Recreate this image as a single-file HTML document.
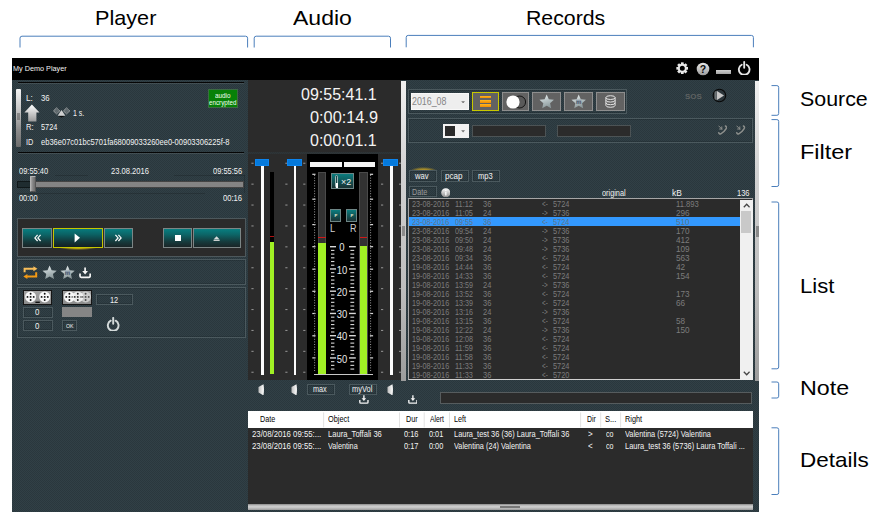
<!DOCTYPE html>
<html><head><meta charset="utf-8"><title>My Demo Player</title>
<style>
html,body{margin:0;padding:0;background:#fff;}
body{width:876px;height:517px;position:relative;overflow:hidden;font-family:"Liberation Sans",sans-serif;}
.a{position:absolute;display:block;}
.t{position:absolute;white-space:nowrap;display:block;}
.tex{background-image:repeating-conic-gradient(#314046 0 25%,#2a373d 0 50%);background-size:2px 2px;}
</style></head><body>
<span class="t" style="top:8.00px;font-size:20.2px;line-height:20.2px;color:#000;left:95.20px;transform-origin:0 0;transform:scaleX(1.0724);">Player</span>
<span class="t" style="top:8.00px;font-size:20.2px;line-height:20.2px;color:#000;left:293.40px;transform-origin:0 0;transform:scaleX(1.1401);">Audio</span>
<span class="t" style="top:8.00px;font-size:20.2px;line-height:20.2px;color:#000;left:526.20px;transform-origin:0 0;transform:scaleX(1.0543);">Records</span>
<span class="t" style="top:89.00px;font-size:20.2px;line-height:20.2px;color:#000;left:799.80px;transform-origin:0 0;transform:scaleX(1.0594);">Source</span>
<span class="t" style="top:142.00px;font-size:20.2px;line-height:20.2px;color:#000;left:800.00px;transform-origin:0 0;transform:scaleX(1.1630);">Filter</span>
<span class="t" style="top:276.00px;font-size:20.2px;line-height:20.2px;color:#000;left:800.00px;transform-origin:0 0;transform:scaleX(1.0944);">List</span>
<span class="t" style="top:378.00px;font-size:20.2px;line-height:20.2px;color:#000;left:800.20px;transform-origin:0 0;transform:scaleX(1.1531);">Note</span>
<span class="t" style="top:450.00px;font-size:20.2px;line-height:20.2px;color:#000;left:800.20px;transform-origin:0 0;transform:scaleX(1.1143);">Details</span>
<svg class="a" style="left:0px;top:0px;" width="876" height="517" viewBox="0 0 876 517"><g fill="none" stroke="#4a7ebb" stroke-width="1"><path d="M20,47.5 V38.2 Q20,36.2 22,36.2 H245.6 Q247.6,36.2 247.6,38.2 V47.5"/><path d="M254.2,47.5 V38.2 Q254.2,36.2 256.2,36.2 H388.5 Q390.5,36.2 390.5,38.2 V47.5"/><path d="M406.2,47.3 V37.4 Q406.2,35.4 408.2,35.4 H751.4 Q753.4,35.4 753.4,37.4 V47.3"/><path d="M771.5,85.6 H776.9000000000001 Q778.7,85.6 778.7,87.39999999999999 V113.5 Q778.7,115.3 776.9000000000001,115.3 H771.5"/><path d="M771.5,119.6 H776.9000000000001 Q778.7,119.6 778.7,121.39999999999999 V184.7 Q778.7,186.5 776.9000000000001,186.5 H771.5"/><path d="M771.5,202 H776.9000000000001 Q778.7,202 778.7,203.8 V367.0 Q778.7,368.8 776.9000000000001,368.8 H771.5"/><path d="M771.5,382 H776.9000000000001 Q778.7,382 778.7,383.8 V396.2 Q778.7,398 776.9000000000001,398 H771.5"/><path d="M771.5,427.8 H776.9000000000001 Q778.7,427.8 778.7,429.6 V492.7 Q778.7,494.5 776.9000000000001,494.5 H771.5"/></g></svg>
<div class="a tex" style="left:12px;top:58px;width:746.8px;height:453.6px;background-color:#2d3b41;"></div>
<div class="a" style="left:12px;top:58px;width:746.8px;height:22px;background:#000;"></div>
<span class="t" style="top:65.00px;font-size:7.8px;line-height:7.8px;color:#f4f4f4;left:12.70px;transform-origin:0 0;transform:scaleX(0.9316);">My Demo Player</span>
<svg class="a" style="left:675.6px;top:61.6px;" width="12.6" height="12.6" viewBox="0 0 14 14"><g transform="translate(7,7)"><g fill="#e8e8e8"><rect x="-1.5" y="-6.6" width="3" height="3.2" transform="rotate(0)"/><rect x="-1.5" y="-6.6" width="3" height="3.2" transform="rotate(45)"/><rect x="-1.5" y="-6.6" width="3" height="3.2" transform="rotate(90)"/><rect x="-1.5" y="-6.6" width="3" height="3.2" transform="rotate(135)"/><rect x="-1.5" y="-6.6" width="3" height="3.2" transform="rotate(180)"/><rect x="-1.5" y="-6.6" width="3" height="3.2" transform="rotate(225)"/><rect x="-1.5" y="-6.6" width="3" height="3.2" transform="rotate(270)"/><rect x="-1.5" y="-6.6" width="3" height="3.2" transform="rotate(315)"/></g><circle r="3.9" fill="none" stroke="#e8e8e8" stroke-width="2.2"/></g></svg>
<svg class="a" style="left:695.5px;top:61.8px;" width="14" height="14" viewBox="0 0 14 14"><defs><linearGradient id="hg" x1="0" y1="0" x2="0" y2="1"><stop offset="0" stop-color="#e8e8e8"/><stop offset="1" stop-color="#9c9c9c"/></linearGradient></defs><circle cx="7" cy="7" r="6.3" fill="url(#hg)"/><text x="7" y="10.6" font-size="10.5" font-weight="700" text-anchor="middle" fill="#0a0a0a" font-family="Liberation Sans, sans-serif">?</text></svg>
<div class="a" style="left:716.4px;top:70.2px;width:14.3px;height:4.2px;background:linear-gradient(#d0d0d0,#a4a4a4);"></div>
<svg class="a" style="left:737.4px;top:60.6px;" width="14.4" height="14.4" viewBox="0 0 14 14"><g fill="none" stroke="#e6e6e6" stroke-width="1.8" stroke-linecap="round"><path d="M4.6,3.6 A5.2,5.2 0 1 0 9.4,3.6"/><path d="M7,0.9 V6.6"/></g></svg>
<div class="a" style="left:17.5px;top:82.1px;width:226.7px;height:1.3px;background:#050505;"></div>
<div class="a" style="left:17.5px;top:83.4px;width:226.7px;height:0.8px;background:rgba(255,255,255,.10);"></div>
<div class="a" style="left:17.5px;top:151.5px;width:226.7px;height:1.3px;background:#050505;"></div>
<div class="a" style="left:17.5px;top:152.8px;width:226.7px;height:0.8px;background:rgba(255,255,255,.10);"></div>
<div class="a" style="left:16.2px;top:88.5px;width:4.8px;height:58.1px;background:linear-gradient(#f4f4f4,#c8c8c8 35%,#8c8c8c 70%,#6c6c6c);border-radius:1px;"></div>
<div class="a" style="left:17.3px;top:113.2px;width:2.6px;height:6.4px;background:rgba(85,85,85,.5);"></div>
<span class="t" style="top:93.00px;font-size:9.5px;line-height:9.5px;color:#f2f2f2;left:25.50px;transform-origin:0 0;transform:scaleX(0.8710);">L:</span>
<span class="t" style="top:93.00px;font-size:9.5px;line-height:9.5px;color:#f2f2f2;left:41.40px;transform-origin:0 0;transform:scaleX(0.8139);">36</span>
<span class="t" style="top:108.00px;font-size:9.5px;line-height:9.5px;color:#f2f2f2;left:73.00px;transform-origin:0 0;transform:scaleX(0.7315);">1 s.</span>
<span class="t" style="top:122.00px;font-size:9.5px;line-height:9.5px;color:#f2f2f2;left:25.50px;transform-origin:0 0;transform:scaleX(0.8105);">R:</span>
<span class="t" style="top:122.00px;font-size:9.5px;line-height:9.5px;color:#f2f2f2;left:41.40px;transform-origin:0 0;transform:scaleX(0.7714);">5724</span>
<span class="t" style="top:137.00px;font-size:9.5px;line-height:9.5px;color:#f2f2f2;left:25.50px;transform-origin:0 0;transform:scaleX(0.7684);">ID</span>
<span class="t" style="top:137.00px;font-size:9.5px;line-height:9.5px;color:#f2f2f2;left:41.00px;transform-origin:0 0;transform:scaleX(0.7926);">eb36e07c01bc5701fa68009033260ee0-00903306225f-8</span>
<svg class="a" style="left:24px;top:103.5px;" width="16" height="18" viewBox="0 0 16 18"><defs><linearGradient id="ga" x1="0" y1="0" x2="0" y2="1"><stop offset="0" stop-color="#fff"/><stop offset="1" stop-color="#9a9a9a"/></linearGradient></defs><path d="M7.9,0.6 L15.5,8.5 H12.4 V17.5 H4.2 V8.5 H0.4 Z" fill="url(#ga)"/></svg>
<svg class="a" style="left:52.6px;top:106.6px;" width="17" height="11" viewBox="0 0 17 11"><g fill="rgba(205,205,205,.32)" stroke="#c4c4c4" stroke-width=".9" stroke-dasharray="1 .6"><path d="M3.6,0.8 L6.8,3.9 L3.6,7 L0.4,3.9 Z"/><path d="M13.6,0.8 L16.8,3.9 L13.6,7 L10.4,3.9 Z"/></g><path d="M8.5,3 L12.4,8.8 H4.6 Z" fill="#cfcfcf"/><path d="M5,9 H12 L8.5,10.6 Z" fill="#0c0c0c"/></svg>
<div class="a" style="left:208px;top:88.8px;width:30px;height:18.9px;background:#078107;border:1px solid #3c6a44;box-sizing:border-box;"></div>
<span class="t" style="top:93.00px;font-size:6.3px;line-height:6.3px;color:#f4fff4;left:215.10px;transform-origin:0 0;transform:scaleX(1.0056);">audio</span>
<span class="t" style="top:100.00px;font-size:6.3px;line-height:6.3px;color:#f4fff4;left:209.40px;transform-origin:0 0;transform:scaleX(0.9904);">encrypted</span>
<span class="t" style="top:166.00px;font-size:9.5px;line-height:9.5px;color:#f2f2f2;left:18.50px;transform-origin:0 0;transform:scaleX(0.7870);">09:55:40</span>
<span class="t" style="top:166.00px;font-size:9.5px;line-height:9.5px;color:#f2f2f2;left:111.40px;transform-origin:0 0;transform:scaleX(0.7972);">23.08.2016</span>
<span class="t" style="top:166.00px;font-size:9.5px;line-height:9.5px;color:#f2f2f2;left:212.80px;transform-origin:0 0;transform:scaleX(0.7897);">09:55:56</span>
<span class="t" style="top:193.00px;font-size:9.5px;line-height:9.5px;color:#f2f2f2;left:18.50px;transform-origin:0 0;transform:scaleX(0.7783);">00:00</span>
<span class="t" style="top:193.00px;font-size:9.5px;line-height:9.5px;color:#f2f2f2;left:222.90px;transform-origin:0 0;transform:scaleX(0.8035);">00:16</span>
<div class="a" style="left:55px;top:174.6px;width:33px;height:0.7px;background:rgba(0,0,0,.16);"></div>
<div class="a" style="left:174px;top:174.6px;width:70.6px;height:0.7px;background:rgba(0,0,0,.16);"></div>
<div class="a" style="left:17.4px;top:193px;width:187.6px;height:0.7px;background:rgba(0,0,0,.16);"></div>
<div class="a" style="left:244.2px;top:175px;width:0.7px;height:18px;background:rgba(0,0,0,.16);"></div>
<div class="a" style="left:17.4px;top:181.3px;width:226.9px;height:6.7px;background:#848484;border:1px solid #444;box-sizing:border-box;"></div>
<div class="a" style="left:17.4px;top:181.3px;width:13.6px;height:6.7px;background:#1f2c30;border:1px solid #10181a;box-sizing:border-box;"></div>
<div class="a" style="left:29.7px;top:175.5px;width:6.7px;height:16.6px;background:linear-gradient(90deg,#a6a6a6,#858585 45%,#6e6e6e);border:1px solid #b5b5b5;border-right-color:#555;border-bottom-color:#555;box-sizing:border-box;border-radius:1px;"></div>
<div class="a" style="left:17.4px;top:218.4px;width:228.4px;height:38.6px;background:#2b2b2b;border:1px solid #4d585c;box-sizing:border-box;"></div>
<div class="a" style="left:59px;top:246.6px;width:38px;height:3.4px;background:radial-gradient(ellipse at 50% 30%,rgba(245,210,0,.95),rgba(245,210,0,.4) 45%,rgba(245,210,0,0) 70%);"></div>
<div class="a" style="left:22.4px;top:228.2px;width:29.4px;height:19.7px;background:linear-gradient(#087e80,#0c6668 30%,#163b3d 70%,#1a2527);border:1px solid #7c8686;box-sizing:border-box;"></div>
<div class="a" style="left:52.6px;top:228.2px;width:50.6px;height:19.7px;background:linear-gradient(#087e80,#0c6668 30%,#163b3d 70%,#1a2527);border:1px solid #7c8686;box-sizing:border-box;border-color:#c6c600;background:linear-gradient(#087a7c,#0b6264 30%,#13363a 70%,#131e22);"></div>
<div class="a" style="left:103.7px;top:228.2px;width:29.3px;height:19.7px;background:linear-gradient(#087e80,#0c6668 30%,#163b3d 70%,#1a2527);border:1px solid #7c8686;box-sizing:border-box;"></div>
<div class="a" style="left:163.3px;top:228.2px;width:28.9px;height:19.7px;background:linear-gradient(#087e80,#0c6668 30%,#163b3d 70%,#1a2527);border:1px solid #7c8686;box-sizing:border-box;"></div>
<div class="a" style="left:193.2px;top:228.2px;width:47.5px;height:19.7px;background:linear-gradient(#087e80,#0c6668 30%,#163b3d 70%,#1a2527);border:1px solid #7c8686;box-sizing:border-box;"></div>
<svg class="a" style="left:33.6px;top:234.2px;" width="8" height="8" viewBox="0 0 8 8"><g fill="none" stroke="#f8f8f8" stroke-width="1.25"><path d="M3.6,0.8 L0.9,3.9 L3.6,7"/><path d="M6.6,0.8 L3.9,3.9 L6.6,7"/></g></svg>
<svg class="a" style="left:114.4px;top:234.2px;" width="8" height="8" viewBox="0 0 8 8"><g fill="none" stroke="#f8f8f8" stroke-width="1.25"><path d="M1.4,0.8 L4.1,3.9 L1.4,7"/><path d="M4.4,0.8 L7.1,3.9 L4.4,7"/></g></svg>
<svg class="a" style="left:74.4px;top:233.4px;" width="7" height="10" viewBox="0 0 7 10"><path d="M0.6,0.4 L6,4.8 L0.6,9.4 Z" fill="#fff"/></svg>
<div class="a" style="left:174.8px;top:235.2px;width:6.4px;height:6.2px;background:#fff;"></div>
<svg class="a" style="left:212.6px;top:235.6px;" width="7.2" height="5.9" viewBox="0 0 8 6.5"><path d="M4,0.2 L7.4,3.8 H0.6 Z" fill="#d8dcdc"/><rect x="0.6" y="4.3" width="6.8" height="1.7" fill="#c8cccc"/></svg>
<div class="a" style="left:17.4px;top:259px;width:228.4px;height:26px;border:1px solid #4b595e;box-sizing:border-box;box-shadow:inset 0 0 0 1px rgba(18,26,30,.22);"></div>
<div class="a" style="left:17.4px;top:287px;width:228.4px;height:51px;border:1px solid #4b595e;box-sizing:border-box;box-shadow:inset 0 0 0 1px rgba(18,26,30,.22);"></div>
<svg class="a" style="left:23.2px;top:266.4px;" width="15" height="13" viewBox="0 0 15 13"><g fill="none" stroke-width="2"><path d="M1.6,6.2 V2.8 H11" stroke="#f8be5a"/><path d="M13.2,6.2 V10.4 H3.6" stroke="#f49a14"/></g><path d="M10.4,0.3 L14.4,2.8 L10.4,5.3 Z" fill="#f8be5a"/><path d="M4.4,7.9 L0.4,10.4 L4.4,12.9 Z" fill="#f49a14"/></svg>
<svg class="a" style="left:41.5px;top:264.9px;" width="15.2" height="15.2" viewBox="0 0 14 14"><defs><linearGradient id="s1" x1="0" y1="0" x2="0.3" y2="1"><stop offset="0" stop-color="#f2f6f6"/><stop offset="0.55" stop-color="#b4c0c2"/><stop offset="1" stop-color="#8d9a9c"/></linearGradient></defs><path d="M7.00,0.50 L8.91,4.77 L13.56,5.27 L10.09,8.40 L11.06,12.98 L7.00,10.65 L2.94,12.98 L3.91,8.40 L0.44,5.27 L5.09,4.77 Z" fill="url(#s1)"/></svg>
<svg class="a" style="left:60.2px;top:264.9px;" width="15.2" height="15.2" viewBox="0 0 14 14"><defs><linearGradient id="s2" x1="0" y1="0" x2="0.3" y2="1"><stop offset="0" stop-color="#f2f6f6"/><stop offset="0.55" stop-color="#b4c0c2"/><stop offset="1" stop-color="#8d9a9c"/></linearGradient></defs><path d="M7.00,0.50 L8.91,4.77 L13.56,5.27 L10.09,8.40 L11.06,12.98 L7.00,10.65 L2.94,12.98 L3.91,8.40 L0.44,5.27 L5.09,4.77 Z" fill="url(#s2)"/><rect x="4.6" y="5.2" width="4.8" height="3.6" fill="#7e8fa0" opacity=".75"/><text x="7" y="9" font-size="5.5" text-anchor="middle" fill="#2a3550" font-family="Liberation Sans, sans-serif">m</text></svg>
<svg class="a" style="left:79.2px;top:267.4px;" width="12.2" height="11.4" viewBox="0 0 12 11"><g fill="none" stroke="#f4f4f4" stroke-width="1.7"><path d="M1,6.2 V8.8 Q1,10 2.2,10 H9.8 Q11,10 11,8.8 V6.2"/><path d="M6,0.3 V5"/></g><path d="M3.2,3.9 H8.8 L6,7.3 Z" fill="#f4f4f4"/></svg>
<div class="a" style="left:23.2px;top:290.3px;width:29.3px;height:14.5px;background:linear-gradient(#a4a4a4,#8c8c8c);border:1px solid #161616;box-sizing:border-box;"></div>
<svg class="a" style="left:23.2px;top:290.3px;" width="29.3" height="14.5" viewBox="0 0 29.3 14.5"><g opacity="1"><circle cx="7.6" cy="6.9" r="5.5" fill="#f8f8f8"/><g fill="#0c0c0c"><circle cx="7.6" cy="6.9" r=".95"/><circle cx="4.5" cy="6.9" r=".95"/><circle cx="10.7" cy="6.9" r=".95"/><circle cx="7.6" cy="3.8" r=".95"/><circle cx="7.6" cy="10" r=".95"/></g></g><g opacity="1"><circle cx="21.7" cy="6.9" r="5.5" fill="#f8f8f8"/><g fill="#0c0c0c"><circle cx="21.7" cy="6.9" r=".95"/><circle cx="18.599999999999998" cy="6.9" r=".95"/><circle cx="24.8" cy="6.9" r=".95"/><circle cx="21.7" cy="3.8" r=".95"/><circle cx="21.7" cy="10" r=".95"/></g></g><rect x="12.4" y="11.6" width="4.4" height="1.4" fill="#111"/></svg>
<div class="a" style="left:62.3px;top:290.3px;width:29.3px;height:14.5px;background:linear-gradient(#a4a4a4,#8c8c8c);border:1px solid #161616;box-sizing:border-box;"></div>
<svg class="a" style="left:62.3px;top:290.3px;" width="29.3" height="14.5" viewBox="0 0 29.3 14.5"><g opacity="1"><circle cx="7.4" cy="6.9" r="5.5" fill="#f8f8f8"/><g fill="#0c0c0c"><circle cx="7.4" cy="6.9" r=".95"/><circle cx="4.300000000000001" cy="6.9" r=".95"/><circle cx="10.5" cy="6.9" r=".95"/><circle cx="7.4" cy="3.8" r=".95"/><circle cx="7.4" cy="10" r=".95"/></g></g><g opacity="0.85"><circle cx="15.8" cy="6.9" r="5.5" fill="#f8f8f8"/><g fill="#0c0c0c"><circle cx="15.8" cy="6.9" r=".95"/><circle cx="12.700000000000001" cy="6.9" r=".95"/><circle cx="18.900000000000002" cy="6.9" r=".95"/><circle cx="15.8" cy="3.8" r=".95"/><circle cx="15.8" cy="10" r=".95"/></g></g><g opacity="0.55"><circle cx="23.6" cy="6.9" r="5.5" fill="#f8f8f8"/><g fill="#0c0c0c"><circle cx="23.6" cy="6.9" r=".95"/><circle cx="20.5" cy="6.9" r=".95"/><circle cx="26.700000000000003" cy="6.9" r=".95"/><circle cx="23.6" cy="3.8" r=".95"/><circle cx="23.6" cy="10" r=".95"/></g></g></svg>
<div class="a" style="left:95.5px;top:294.2px;width:37.5px;height:10.7px;border:1px solid #4b595e;box-sizing:border-box;box-shadow:inset 0 0 0 1px rgba(18,26,30,.22);"></div>
<span class="t" style="top:295.00px;font-size:9.5px;line-height:9.5px;color:#f2f2f2;left:110.20px;transform-origin:0 0;transform:scaleX(0.7761);">12</span>
<div class="a" style="left:23.1px;top:306.9px;width:29.9px;height:10.8px;border:1px solid #4b595e;box-sizing:border-box;box-shadow:inset 0 0 0 1px rgba(18,26,30,.22);"></div>
<span class="t" style="top:307.00px;font-size:9.5px;line-height:9.5px;color:#f2f2f2;left:35.40px;transform-origin:0 0;transform:scaleX(0.8329);">0</span>
<div class="a" style="left:62.3px;top:307px;width:29.3px;height:10.4px;background:#858585;"></div>
<div class="a" style="left:23.1px;top:320.1px;width:29.9px;height:10.7px;border:1px solid #4b595e;box-sizing:border-box;box-shadow:inset 0 0 0 1px rgba(18,26,30,.22);"></div>
<span class="t" style="top:321.00px;font-size:9.5px;line-height:9.5px;color:#f2f2f2;left:35.40px;transform-origin:0 0;transform:scaleX(0.8329);">0</span>
<div class="a" style="left:62.2px;top:320.1px;width:14.8px;height:10.7px;border:1px solid #4b595e;box-sizing:border-box;box-shadow:inset 0 0 0 1px rgba(18,26,30,.22);"></div>
<span class="t" style="top:324.00px;font-size:5.6px;line-height:5.6px;color:#f2f2f2;left:65.70px;transform-origin:0 0;transform:scaleX(0.9269);">OK</span>
<svg class="a" style="left:106.2px;top:316.8px;" width="14.4" height="14.4" viewBox="0 0 14 14"><g fill="none" stroke="#d4dada" stroke-width="1.9" stroke-linecap="round"><path d="M4.6,3.6 A5.2,5.2 0 1 0 9.4,3.6"/><path d="M7,0.9 V6.6"/></g></svg>
<div class="a" style="left:248px;top:80px;width:153px;height:71.6px;background:#2b2b2b;"></div>
<div class="a" style="left:248px;top:151.6px;width:153px;height:2.1px;background:rgba(43,43,43,.55);"></div>
<div class="a" style="left:248px;top:153.7px;width:153px;height:226.3px;background:#2b2b2b;"></div>
<div class="a" style="left:307px;top:154px;width:71px;height:226px;background:#000;"></div>
<span class="t" style="top:87.00px;font-size:15.6px;line-height:15.6px;color:#f4f4f4;left:301.20px;transform-origin:0 0;transform:scaleX(1.0268);">09:55:41.1</span>
<span class="t" style="top:110.00px;font-size:15.6px;line-height:15.6px;color:#f4f4f4;left:310.20px;transform-origin:0 0;transform:scaleX(1.0453);">0:00:14.9</span>
<span class="t" style="top:133.00px;font-size:15.6px;line-height:15.6px;color:#f4f4f4;left:310.20px;transform-origin:0 0;transform:scaleX(1.0253);">0:00:01.1</span>
<svg class="a" style="left:0px;top:0px;" width="876" height="517" viewBox="0 0 876 517"><g fill="#8e8e8e"><rect x="251.4" y="162.70" width="2.2" height="1.1"/><rect x="285.3" y="162.70" width="2.2" height="1.1"/><rect x="303.2" y="162.70" width="2.2" height="1.1"/><rect x="381" y="162.70" width="2.2" height="1.1"/><rect x="399" y="162.70" width="2.2" height="1.1"/><rect x="251.4" y="183.60" width="2.2" height="1.1"/><rect x="285.3" y="183.60" width="2.2" height="1.1"/><rect x="303.2" y="183.60" width="2.2" height="1.1"/><rect x="381" y="183.60" width="2.2" height="1.1"/><rect x="399" y="183.60" width="2.2" height="1.1"/><rect x="251.4" y="204.50" width="2.2" height="1.1"/><rect x="285.3" y="204.50" width="2.2" height="1.1"/><rect x="303.2" y="204.50" width="2.2" height="1.1"/><rect x="381" y="204.50" width="2.2" height="1.1"/><rect x="399" y="204.50" width="2.2" height="1.1"/><rect x="251.4" y="225.40" width="2.2" height="1.1"/><rect x="285.3" y="225.40" width="2.2" height="1.1"/><rect x="303.2" y="225.40" width="2.2" height="1.1"/><rect x="381" y="225.40" width="2.2" height="1.1"/><rect x="399" y="225.40" width="2.2" height="1.1"/><rect x="251.4" y="246.30" width="2.2" height="1.1"/><rect x="285.3" y="246.30" width="2.2" height="1.1"/><rect x="303.2" y="246.30" width="2.2" height="1.1"/><rect x="381" y="246.30" width="2.2" height="1.1"/><rect x="399" y="246.30" width="2.2" height="1.1"/><rect x="251.4" y="267.20" width="2.2" height="1.1"/><rect x="285.3" y="267.20" width="2.2" height="1.1"/><rect x="303.2" y="267.20" width="2.2" height="1.1"/><rect x="381" y="267.20" width="2.2" height="1.1"/><rect x="399" y="267.20" width="2.2" height="1.1"/><rect x="251.4" y="288.10" width="2.2" height="1.1"/><rect x="285.3" y="288.10" width="2.2" height="1.1"/><rect x="303.2" y="288.10" width="2.2" height="1.1"/><rect x="381" y="288.10" width="2.2" height="1.1"/><rect x="399" y="288.10" width="2.2" height="1.1"/><rect x="251.4" y="309.00" width="2.2" height="1.1"/><rect x="285.3" y="309.00" width="2.2" height="1.1"/><rect x="303.2" y="309.00" width="2.2" height="1.1"/><rect x="381" y="309.00" width="2.2" height="1.1"/><rect x="399" y="309.00" width="2.2" height="1.1"/><rect x="251.4" y="329.90" width="2.2" height="1.1"/><rect x="285.3" y="329.90" width="2.2" height="1.1"/><rect x="303.2" y="329.90" width="2.2" height="1.1"/><rect x="381" y="329.90" width="2.2" height="1.1"/><rect x="399" y="329.90" width="2.2" height="1.1"/><rect x="251.4" y="350.80" width="2.2" height="1.1"/><rect x="285.3" y="350.80" width="2.2" height="1.1"/><rect x="303.2" y="350.80" width="2.2" height="1.1"/><rect x="381" y="350.80" width="2.2" height="1.1"/><rect x="399" y="350.80" width="2.2" height="1.1"/><rect x="251.4" y="371.70" width="2.2" height="1.1"/><rect x="285.3" y="371.70" width="2.2" height="1.1"/><rect x="303.2" y="371.70" width="2.2" height="1.1"/><rect x="381" y="371.70" width="2.2" height="1.1"/><rect x="399" y="371.70" width="2.2" height="1.1"/></g></svg>
<div class="a" style="left:261px;top:165px;width:2.8px;height:209.8px;background:#fcfcfc;"></div>
<div class="a" style="left:254.6px;top:159.1px;width:14.8px;height:7.3px;background:#0579db;box-shadow:inset 0 0 0 1px #0c84ee;"></div>
<div class="a" style="left:293.5px;top:165px;width:2.8px;height:209.8px;background:#fcfcfc;"></div>
<div class="a" style="left:287.1px;top:159.1px;width:14.9px;height:7.3px;background:#0579db;box-shadow:inset 0 0 0 1px #0c84ee;"></div>
<div class="a" style="left:390px;top:165px;width:2.8px;height:209.8px;background:#fcfcfc;"></div>
<div class="a" style="left:383.4px;top:159.1px;width:14.9px;height:7.3px;background:#0579db;box-shadow:inset 0 0 0 1px #0c84ee;"></div>
<div class="a" style="left:269.8px;top:172.4px;width:4.4px;height:201.6px;background:#000;"></div>
<div class="a" style="left:269.8px;top:236.2px;width:4.4px;height:1.2px;background:#b01010;"></div>
<div class="a" style="left:269.8px;top:241.6px;width:4.4px;height:132.4px;background:#a0f024;"></div>
<div class="a" style="left:309.6px;top:161.9px;width:32.6px;height:4.8px;background:#f6f6f6;"></div>
<div class="a" style="left:344px;top:161.9px;width:31.1px;height:4.8px;background:#f6f6f6;"></div>
<div class="a" style="left:317.8px;top:172.4px;width:8.7px;height:201.8px;background:#323232;border:1px solid #4a4a4a;border-bottom:none;box-sizing:border-box;"></div>
<div class="a" style="left:318.3px;top:237.2px;width:7.7px;height:1.2px;background:#d01818;"></div>
<div class="a" style="left:318.4px;top:242.9px;width:7.5px;height:131.3px;background:#a0f024;"></div>
<div class="a" style="left:359.2px;top:172.4px;width:8.6px;height:201.8px;background:#323232;border:1px solid #4a4a4a;border-bottom:none;box-sizing:border-box;"></div>
<div class="a" style="left:359.7px;top:237.2px;width:7.6px;height:1.2px;background:#d01818;"></div>
<div class="a" style="left:359.8px;top:245.6px;width:7.4px;height:128.6px;background:#a0f024;"></div>
<div class="a" style="left:313.5px;top:374px;width:59.5px;height:1px;background:#c8c8c8;"></div>
<svg class="a" style="left:0px;top:0px;" width="876" height="517" viewBox="0 0 876 517"><g fill="#d8d8d8"><rect x="312.3" y="173.70" width="3.2" height="1.2"/><rect x="369.9" y="173.70" width="3.2" height="1.2"/><rect x="312.3" y="198.60" width="3.2" height="1.2"/><rect x="369.9" y="198.60" width="3.2" height="1.2"/><rect x="312.3" y="224.00" width="3.2" height="1.2"/><rect x="369.9" y="224.00" width="3.2" height="1.2"/><rect x="312.3" y="246.10" width="3.2" height="1.2"/><rect x="369.9" y="246.10" width="3.2" height="1.2"/><rect x="312.3" y="268.60" width="3.2" height="1.2"/><rect x="369.9" y="268.60" width="3.2" height="1.2"/><rect x="312.3" y="290.70" width="3.2" height="1.2"/><rect x="369.9" y="290.70" width="3.2" height="1.2"/><rect x="312.3" y="312.90" width="3.2" height="1.2"/><rect x="369.9" y="312.90" width="3.2" height="1.2"/><rect x="312.3" y="335.20" width="3.2" height="1.2"/><rect x="369.9" y="335.20" width="3.2" height="1.2"/><rect x="312.3" y="357.30" width="3.2" height="1.2"/><rect x="369.9" y="357.30" width="3.2" height="1.2"/><path d="M314.6,175 V372 M370.6,175 V372" stroke="#9a9a9a" stroke-width="1" stroke-dasharray="1 1.6" fill="none"/><rect x="330" y="246.00" width="6" height="1.4"/><rect x="349" y="246.00" width="6.8" height="1.4"/><rect x="331" y="249.86" width="3.4" height="1.1"/><rect x="350.4" y="249.86" width="3.8" height="1.1"/><rect x="331" y="253.57" width="3.4" height="1.1"/><rect x="350.4" y="253.57" width="3.8" height="1.1"/><rect x="331" y="257.27" width="3.4" height="1.1"/><rect x="350.4" y="257.27" width="3.8" height="1.1"/><rect x="331" y="260.98" width="3.4" height="1.1"/><rect x="350.4" y="260.98" width="3.8" height="1.1"/><rect x="331" y="264.69" width="3.4" height="1.1"/><rect x="350.4" y="264.69" width="3.8" height="1.1"/><rect x="330" y="268.25" width="6" height="1.4"/><rect x="349" y="268.25" width="6.8" height="1.4"/><rect x="331" y="272.11" width="3.4" height="1.1"/><rect x="350.4" y="272.11" width="3.8" height="1.1"/><rect x="331" y="275.82" width="3.4" height="1.1"/><rect x="350.4" y="275.82" width="3.8" height="1.1"/><rect x="331" y="279.52" width="3.4" height="1.1"/><rect x="350.4" y="279.52" width="3.8" height="1.1"/><rect x="331" y="283.23" width="3.4" height="1.1"/><rect x="350.4" y="283.23" width="3.8" height="1.1"/><rect x="331" y="286.94" width="3.4" height="1.1"/><rect x="350.4" y="286.94" width="3.8" height="1.1"/><rect x="330" y="290.50" width="6" height="1.4"/><rect x="349" y="290.50" width="6.8" height="1.4"/><rect x="331" y="294.36" width="3.4" height="1.1"/><rect x="350.4" y="294.36" width="3.8" height="1.1"/><rect x="331" y="298.07" width="3.4" height="1.1"/><rect x="350.4" y="298.07" width="3.8" height="1.1"/><rect x="331" y="301.77" width="3.4" height="1.1"/><rect x="350.4" y="301.77" width="3.8" height="1.1"/><rect x="331" y="305.48" width="3.4" height="1.1"/><rect x="350.4" y="305.48" width="3.8" height="1.1"/><rect x="331" y="309.19" width="3.4" height="1.1"/><rect x="350.4" y="309.19" width="3.8" height="1.1"/><rect x="330" y="312.75" width="6" height="1.4"/><rect x="349" y="312.75" width="6.8" height="1.4"/><rect x="331" y="316.61" width="3.4" height="1.1"/><rect x="350.4" y="316.61" width="3.8" height="1.1"/><rect x="331" y="320.32" width="3.4" height="1.1"/><rect x="350.4" y="320.32" width="3.8" height="1.1"/><rect x="331" y="324.02" width="3.4" height="1.1"/><rect x="350.4" y="324.02" width="3.8" height="1.1"/><rect x="331" y="327.73" width="3.4" height="1.1"/><rect x="350.4" y="327.73" width="3.8" height="1.1"/><rect x="331" y="331.44" width="3.4" height="1.1"/><rect x="350.4" y="331.44" width="3.8" height="1.1"/><rect x="330" y="335.00" width="6" height="1.4"/><rect x="349" y="335.00" width="6.8" height="1.4"/><rect x="331" y="338.86" width="3.4" height="1.1"/><rect x="350.4" y="338.86" width="3.8" height="1.1"/><rect x="331" y="342.57" width="3.4" height="1.1"/><rect x="350.4" y="342.57" width="3.8" height="1.1"/><rect x="331" y="346.27" width="3.4" height="1.1"/><rect x="350.4" y="346.27" width="3.8" height="1.1"/><rect x="331" y="349.98" width="3.4" height="1.1"/><rect x="350.4" y="349.98" width="3.8" height="1.1"/><rect x="331" y="353.69" width="3.4" height="1.1"/><rect x="350.4" y="353.69" width="3.8" height="1.1"/><rect x="330" y="357.25" width="6" height="1.4"/><rect x="349" y="357.25" width="6.8" height="1.4"/><rect x="331" y="361.11" width="3.4" height="1.1"/><rect x="350.4" y="361.11" width="3.8" height="1.1"/><rect x="331" y="364.82" width="3.4" height="1.1"/><rect x="350.4" y="364.82" width="3.8" height="1.1"/><rect x="331" y="368.52" width="3.4" height="1.1"/><rect x="350.4" y="368.52" width="3.8" height="1.1"/></g></svg>
<span class="t" style="top:242.00px;font-size:11px;line-height:11px;color:#e8e8e8;left:342.30px;transform-origin:0 0;transform:translateX(-50%) scaleX(0.8600);transform-origin:50% 0;">0</span>
<span class="t" style="top:265.00px;font-size:11px;line-height:11px;color:#e8e8e8;left:342.30px;transform-origin:0 0;transform:translateX(-50%) scaleX(0.8600);transform-origin:50% 0;">10</span>
<span class="t" style="top:287.00px;font-size:11px;line-height:11px;color:#e8e8e8;left:342.30px;transform-origin:0 0;transform:translateX(-50%) scaleX(0.8600);transform-origin:50% 0;">20</span>
<span class="t" style="top:309.00px;font-size:11px;line-height:11px;color:#e8e8e8;left:342.30px;transform-origin:0 0;transform:translateX(-50%) scaleX(0.8600);transform-origin:50% 0;">30</span>
<span class="t" style="top:331.00px;font-size:11px;line-height:11px;color:#e8e8e8;left:342.30px;transform-origin:0 0;transform:translateX(-50%) scaleX(0.8600);transform-origin:50% 0;">40</span>
<span class="t" style="top:354.00px;font-size:11px;line-height:11px;color:#e8e8e8;left:342.30px;transform-origin:0 0;transform:translateX(-50%) scaleX(0.8600);transform-origin:50% 0;">50</span>
<span class="t" style="top:224.00px;font-size:10.2px;line-height:10.2px;color:#d0d0d0;left:330.00px;transform-origin:0 0;transform:scaleX(0.9168);">L</span>
<span class="t" style="top:224.00px;font-size:10.2px;line-height:10.2px;color:#d0d0d0;left:350.00px;transform-origin:0 0;transform:scaleX(0.8824);">R</span>
<div class="a" style="left:331.3px;top:172.8px;width:22.5px;height:16.4px;background:linear-gradient(#0b7d7f,#115658 50%,#1b3133);border:1px solid #6d8585;box-sizing:border-box;"></div>
<div class="a" style="left:334.8px;top:174.8px;width:3.6px;height:13.4px;background:#164648;border:1px solid #9fb4b4;box-sizing:border-box;border-radius:1.5px;"></div>
<div class="a" style="left:335.5px;top:183px;width:2.2px;height:4.6px;background:#fff;"></div>
<span class="t" style="top:178.00px;font-size:8.4px;line-height:8.4px;color:#f0f0f0;left:341.00px;transform-origin:0 0;transform:scaleX(1.0650);">×2</span>
<div class="a" style="left:329.8px;top:208.5px;width:11.2px;height:13px;background:linear-gradient(#0b7d7f,#115658 50%,#1b3133);border:1px solid #6d8585;box-sizing:border-box;"></div>
<div class="a" style="left:345.7px;top:208.5px;width:11.5px;height:13px;background:linear-gradient(#0b7d7f,#115658 50%,#1b3133);border:1px solid #6d8585;box-sizing:border-box;"></div>
<span class="t" style="top:214.00px;font-size:4.2px;line-height:4.2px;color:#f0ecd0;font-weight:700;left:334.60px;transform-origin:0 0;transform:scaleX(1.0000);">P</span>
<span class="t" style="top:214.00px;font-size:4.2px;line-height:4.2px;color:#f0ecd0;font-weight:700;left:350.60px;transform-origin:0 0;transform:scaleX(1.0000);">P</span>
<svg class="a" style="left:257.6px;top:383.6px;" width="6" height="11.6" viewBox="0 0 6 11.6"><defs><linearGradient id="sp257" x1="0" y1="0" x2="1" y2="0"><stop offset="0" stop-color="#bdbdbd"/><stop offset="1" stop-color="#fff"/></linearGradient></defs><path d="M5.5,0.2 Q6.4,5.8 5.5,11.4 L0.5,8.6 V3 Z" fill="url(#sp257)"/></svg>
<svg class="a" style="left:291px;top:383.6px;" width="6" height="11.6" viewBox="0 0 6 11.6"><defs><linearGradient id="sp291" x1="0" y1="0" x2="1" y2="0"><stop offset="0" stop-color="#bdbdbd"/><stop offset="1" stop-color="#fff"/></linearGradient></defs><path d="M5.5,0.2 Q6.4,5.8 5.5,11.4 L0.5,8.6 V3 Z" fill="url(#sp291)"/></svg>
<svg class="a" style="left:386.6px;top:383.6px;" width="6" height="11.6" viewBox="0 0 6 11.6"><defs><linearGradient id="sp386" x1="0" y1="0" x2="1" y2="0"><stop offset="0" stop-color="#bdbdbd"/><stop offset="1" stop-color="#fff"/></linearGradient></defs><path d="M5.5,0.2 Q6.4,5.8 5.5,11.4 L0.5,8.6 V3 Z" fill="url(#sp386)"/></svg>
<div class="a" style="left:307px;top:383.7px;width:27.8px;height:10.9px;border:1px solid #4b595e;box-sizing:border-box;box-shadow:inset 0 0 0 1px rgba(18,26,30,.22);"></div>
<span class="t" style="top:384.00px;font-size:9.5px;line-height:9.5px;color:#f2f2f2;left:313.20px;transform-origin:0 0;transform:scaleX(0.7634);">max</span>
<div class="a" style="left:348.9px;top:383.7px;width:28.1px;height:10.9px;border:1px solid #4b595e;box-sizing:border-box;box-shadow:inset 0 0 0 1px rgba(18,26,30,.22);"></div>
<span class="t" style="top:384.00px;font-size:9.5px;line-height:9.5px;color:#f2f2f2;left:351.90px;transform-origin:0 0;transform:scaleX(0.7847);">myVol</span>
<svg class="a" style="left:358.8px;top:394.8px;" width="9.8" height="9" viewBox="0 0 12 11"><g fill="none" stroke="#f4f4f4" stroke-width="1.7"><path d="M1,6.2 V8.8 Q1,10 2.2,10 H9.8 Q11,10 11,8.8 V6.2"/><path d="M6,0.3 V5"/></g><path d="M3.2,3.9 H8.8 L6,7.3 Z" fill="#f4f4f4"/></svg>
<svg class="a" style="left:407.5px;top:394.8px;" width="9.8" height="9" viewBox="0 0 12 11"><g fill="none" stroke="#f4f4f4" stroke-width="1.7"><path d="M1,6.2 V8.8 Q1,10 2.2,10 H9.8 Q11,10 11,8.8 V6.2"/><path d="M6,0.3 V5"/></g><path d="M3.2,3.9 H8.8 L6,7.3 Z" fill="#f4f4f4"/></svg>
<div class="a" style="left:401px;top:81px;width:4.8px;height:299.5px;background:linear-gradient(#f0f0f0,#d2d2d2 30%,#bdbdbd 70%,#9c9c9c);"></div>
<div class="a" style="left:402.1px;top:225.8px;width:2.6px;height:10.7px;background:#8c8c8c;"></div>
<div class="a" style="left:754.8px;top:81px;width:4px;height:299.8px;background:linear-gradient(#f0f0f0,#d2d2d2 30%,#bdbdbd 70%,#9c9c9c);"></div>
<div class="a" style="left:756.4px;top:225.9px;width:2.2px;height:11px;background:#8a8a8a;"></div>
<div class="a" style="left:407.7px;top:88.5px;width:219.6px;height:25.3px;border:1px solid #4b595e;box-sizing:border-box;box-shadow:inset 0 0 0 1px rgba(18,26,30,.22);"></div>
<div class="a" style="left:407.7px;top:117.5px;width:345.1px;height:25.1px;border:1px solid #4b595e;box-sizing:border-box;box-shadow:inset 0 0 0 1px rgba(18,26,30,.22);"></div>
<div class="a" style="left:410.8px;top:93.1px;width:58.1px;height:16.7px;background:#eeeeee;border:1px solid #f8f8f8;box-sizing:border-box;"></div>
<span class="t" style="top:97.00px;font-size:10.2px;line-height:10.2px;color:#858585;left:412.40px;transform-origin:0 0;transform:scaleX(0.8689);">2016_08</span>
<svg class="a" style="left:461.2px;top:100.8px;" width="4.2" height="2.6" viewBox="0 0 4.2 2.6"><path d="M0.2,0.2 H4 L2.1,2.4 Z" fill="#707070"/></svg>
<div class="a" style="left:472px;top:92.2px;width:27.1px;height:18.7px;background:#626262;border:1px solid #8e8e8e;box-sizing:border-box;border-color:#c8c800;"></div>
<div class="a" style="left:479.8px;top:95.8px;width:11px;height:2.6px;background:linear-gradient(#ffb620,#f08c00);"></div>
<div class="a" style="left:479.8px;top:100.1px;width:11px;height:2.6px;background:linear-gradient(#ffb620,#f08c00);"></div>
<div class="a" style="left:479.8px;top:104.4px;width:11px;height:2.6px;background:linear-gradient(#ffb620,#f08c00);"></div>
<div class="a" style="left:501.9px;top:92.2px;width:27.3px;height:18.7px;background:#626262;border:1px solid #8e8e8e;box-sizing:border-box;"></div>
<svg class="a" style="left:505.5px;top:94.5px;" width="21" height="14" viewBox="0 0 21 14"><circle cx="13.6" cy="7" r="6" fill="#595959" stroke="#151515" stroke-width="1"/><circle cx="7" cy="7" r="6.6" fill="#fff"/></svg>
<div class="a" style="left:531.7px;top:92.2px;width:29.5px;height:18.7px;background:#626262;border:1px solid #8e8e8e;box-sizing:border-box;"></div>
<svg class="a" style="left:538.8px;top:93.6px;" width="15.4" height="15.4" viewBox="0 0 14 14"><defs><linearGradient id="s3" x1="0" y1="0" x2="0.3" y2="1"><stop offset="0" stop-color="#f2f6f6"/><stop offset="0.55" stop-color="#b4c0c2"/><stop offset="1" stop-color="#8d9a9c"/></linearGradient></defs><path d="M7.00,0.50 L8.91,4.77 L13.56,5.27 L10.09,8.40 L11.06,12.98 L7.00,10.65 L2.94,12.98 L3.91,8.40 L0.44,5.27 L5.09,4.77 Z" fill="url(#s3)"/></svg>
<div class="a" style="left:563.8px;top:92.2px;width:29.5px;height:18.7px;background:#626262;border:1px solid #8e8e8e;box-sizing:border-box;"></div>
<svg class="a" style="left:570.9px;top:93.6px;" width="15.4" height="15.4" viewBox="0 0 14 14"><defs><linearGradient id="s4" x1="0" y1="0" x2="0.3" y2="1"><stop offset="0" stop-color="#f2f6f6"/><stop offset="0.55" stop-color="#b4c0c2"/><stop offset="1" stop-color="#8d9a9c"/></linearGradient></defs><path d="M7.00,0.50 L8.91,4.77 L13.56,5.27 L10.09,8.40 L11.06,12.98 L7.00,10.65 L2.94,12.98 L3.91,8.40 L0.44,5.27 L5.09,4.77 Z" fill="url(#s4)"/><rect x="4.6" y="5.2" width="4.8" height="3.6" fill="#7e8fa0" opacity=".75"/><text x="7" y="9" font-size="5.5" text-anchor="middle" fill="#2a3550" font-family="Liberation Sans, sans-serif">m</text></svg>
<div class="a" style="left:596px;top:92.2px;width:29.1px;height:18.7px;background:#626262;border:1px solid #8e8e8e;box-sizing:border-box;"></div>
<svg class="a" style="left:605px;top:95.2px;" width="11" height="13" viewBox="0 0 11 13"><g fill="none" stroke="#e4e4e4" stroke-width="1"><ellipse cx="5.5" cy="2.6" rx="4.6" ry="1.9"/><path d="M0.9,2.6 V10.4 A4.6,1.9 0 0 0 10.1,10.4 V2.6"/><path d="M0.9,5.2 A4.6,1.9 0 0 0 10.1,5.2"/><path d="M0.9,7.8 A4.6,1.9 0 0 0 10.1,7.8"/></g></svg>
<span class="t" style="top:93.00px;font-size:7.5px;line-height:7.5px;color:#5f6262;font-weight:700;left:685.10px;transform-origin:0 0;transform:scaleX(1.0607);">SOS</span>
<svg class="a" style="left:711.8px;top:88.2px;" width="15" height="15" viewBox="0 0 15 15"><circle cx="7.4" cy="7.5" r="6.3" fill="#2b353a" stroke="#080808" stroke-width="1.1"/><path d="M2.6,3.8 L4.8,2.8 V12.2 L2.6,11.2 Z" fill="#6f7476"/><path d="M5,2.9 L12,7.5 L5,12.1 Z" fill="#c6c6c6"/></svg>
<div class="a" style="left:443px;top:124.1px;width:25.9px;height:13.9px;background:#f2f2f2;"></div>
<div class="a" style="left:444.9px;top:126px;width:10.1px;height:10px;background:#2a2a2a;"></div>
<svg class="a" style="left:461.2px;top:130.2px;" width="4.2" height="2.6" viewBox="0 0 4.2 2.6"><path d="M0.2,0.2 H4 L2.1,2.4 Z" fill="#707070"/></svg>
<div class="a" style="left:472.4px;top:124.7px;width:74px;height:12.5px;background:#2b2b2b;border:1px solid #4c5355;box-sizing:border-box;"></div>
<div class="a" style="left:556.5px;top:124.7px;width:74.2px;height:12.5px;background:#2b2b2b;border:1px solid #4c5355;box-sizing:border-box;"></div>
<svg class="a" style="left:717.6px;top:124.8px;" width="9.4" height="10" viewBox="0 0 9.4 10"><g fill="none" stroke="#8d8f8c" stroke-linecap="round"><path d="M7.4,1 Q9.2,2 8,3.8 Q6,7.2 2.8,8.8 Q1.2,9.4 0.8,7.8" stroke-width="1.5"/><path d="M0.8,1 L3.8,4 M3.8,4 V1.8 M3.8,4 H1.6" stroke-width="1"/></g></svg>
<svg class="a" style="left:736.4px;top:124.8px;" width="9.4" height="10" viewBox="0 0 9.4 10"><g fill="none" stroke="#8d8f8c" stroke-linecap="round"><path d="M7.4,1 Q9.2,2 8,3.8 Q6,7.2 2.8,8.8 Q1.2,9.4 0.8,7.8" stroke-width="1.5"/><path d="M0.8,1 L3.8,4 M3.8,4 V1.8 M3.8,4 H1.6" stroke-width="1"/></g></svg>
<div class="a" style="left:409.5px;top:166.8px;width:27.1px;height:4.4px;background:radial-gradient(ellipse at 50% 100%,rgba(225,180,30,.95),rgba(225,180,30,.55) 40%,rgba(225,180,30,0) 72%);"></div>
<div class="a" style="left:409.3px;top:170px;width:27.5px;height:11.9px;border:1px solid #4b595e;box-sizing:border-box;box-shadow:inset 0 0 0 1px rgba(18,26,30,.22);"></div>
<div class="a" style="left:440.6px;top:170px;width:28px;height:11.9px;border:1px solid #4b595e;box-sizing:border-box;box-shadow:inset 0 0 0 1px rgba(18,26,30,.22);"></div>
<div class="a" style="left:472px;top:170px;width:27.8px;height:11.9px;border:1px solid #4b595e;box-sizing:border-box;box-shadow:inset 0 0 0 1px rgba(18,26,30,.22);"></div>
<span class="t" style="top:171.00px;font-size:9.5px;line-height:9.5px;color:#f2f2f2;left:415.00px;transform-origin:0 0;transform:scaleX(0.8050);">wav</span>
<span class="t" style="top:171.00px;font-size:9.5px;line-height:9.5px;color:#f2f2f2;left:444.50px;transform-origin:0 0;transform:scaleX(0.8496);">pcap</span>
<span class="t" style="top:171.00px;font-size:9.5px;line-height:9.5px;color:#f2f2f2;left:477.60px;transform-origin:0 0;transform:scaleX(0.8009);">mp3</span>
<div class="a" style="left:409.3px;top:186px;width:27.5px;height:10.9px;border:1px solid #4b595e;box-sizing:border-box;box-shadow:inset 0 0 0 1px rgba(18,26,30,.22);"></div>
<span class="t" style="top:187.00px;font-size:9.5px;line-height:9.5px;color:#9a9a9a;left:412.40px;transform-origin:0 0;transform:scaleX(0.7575);">Date</span>
<svg class="a" style="left:441px;top:187.7px;" width="9.4" height="9.4" viewBox="0 0 9.4 9.4"><defs><linearGradient id="inf" x1="0" y1="0" x2="0" y2="1"><stop offset="0" stop-color="#fdfdfd"/><stop offset="1" stop-color="#8c8c8c"/></linearGradient></defs><circle cx="4.8" cy="4.8" r="4.6" fill="url(#inf)"/><rect x="4.2" y="3.9" width="1.3" height="3.6" fill="#fff"/><rect x="4.2" y="2" width="1.3" height="1.2" fill="#fff"/></svg>
<span class="t" style="top:188.00px;font-size:9.5px;line-height:9.5px;color:#f2f2f2;left:601.70px;transform-origin:0 0;transform:scaleX(0.7706);">original</span>
<span class="t" style="top:188.00px;font-size:9.5px;line-height:9.5px;color:#f2f2f2;left:671.70px;transform-origin:0 0;transform:scaleX(0.8839);">kB</span>
<span class="t" style="top:188.00px;font-size:9.5px;line-height:9.5px;color:#f2f2f2;left:737.20px;transform-origin:0 0;transform:scaleX(0.7887);">136</span>
<div class="a" style="left:407.8px;top:198.1px;width:345px;height:182.2px;background:#2b2b2b;border:1px solid #a6a6a6;border-bottom-color:#d0d0d0;box-sizing:border-box;"></div>
<div class="a" style="left:409px;top:217.2px;width:330.8px;height:9px;background:#3399ff;"></div>
<span class="t" style="top:199.00px;font-size:9.5px;line-height:9.5px;color:#7c7c7c;left:412.00px;transform-origin:0 0;transform:scaleX(0.7656);">23-08-2016</span>
<span class="t" style="top:199.00px;font-size:9.5px;line-height:9.5px;color:#7c7c7c;left:454.50px;transform-origin:0 0;transform:scaleX(0.7760);">11:12</span>
<span class="t" style="top:199.00px;font-size:9.5px;line-height:9.5px;color:#7c7c7c;left:483.30px;transform-origin:0 0;transform:scaleX(0.7856);">36</span>
<span class="t" style="top:199.00px;font-size:9.5px;line-height:9.5px;color:#7c7c7c;left:542.40px;transform-origin:0 0;transform:scaleX(0.6658);">&lt;-</span>
<span class="t" style="top:199.00px;font-size:9.5px;line-height:9.5px;color:#7c7c7c;left:552.80px;transform-origin:0 0;transform:scaleX(0.7761);">5724</span>
<span class="t" style="top:199.00px;font-size:9.5px;line-height:9.5px;color:#7c7c7c;left:676.40px;transform-origin:0 0;transform:scaleX(0.8007);">11.893</span>
<span class="t" style="top:208.00px;font-size:9.5px;line-height:9.5px;color:#7c7c7c;left:412.00px;transform-origin:0 0;transform:scaleX(0.7656);">23-08-2016</span>
<span class="t" style="top:208.00px;font-size:9.5px;line-height:9.5px;color:#7c7c7c;left:454.50px;transform-origin:0 0;transform:scaleX(0.7760);">11:05</span>
<span class="t" style="top:208.00px;font-size:9.5px;line-height:9.5px;color:#7c7c7c;left:483.30px;transform-origin:0 0;transform:scaleX(0.7856);">24</span>
<span class="t" style="top:208.00px;font-size:9.5px;line-height:9.5px;color:#7c7c7c;left:542.40px;transform-origin:0 0;transform:scaleX(0.6658);">-&gt;</span>
<span class="t" style="top:208.00px;font-size:9.5px;line-height:9.5px;color:#7c7c7c;left:552.80px;transform-origin:0 0;transform:scaleX(0.7761);">5736</span>
<span class="t" style="top:208.00px;font-size:9.5px;line-height:9.5px;color:#7c7c7c;left:676.40px;transform-origin:0 0;transform:scaleX(0.8600);">296</span>
<span class="t" style="top:217.00px;font-size:9.5px;line-height:9.5px;color:#5f7488;left:412.00px;transform-origin:0 0;transform:scaleX(0.7656);">23-08-2016</span>
<span class="t" style="top:217.00px;font-size:9.5px;line-height:9.5px;color:#5f7488;left:454.50px;transform-origin:0 0;transform:scaleX(0.7530);">09:55</span>
<span class="t" style="top:217.00px;font-size:9.5px;line-height:9.5px;color:#5f7488;left:483.30px;transform-origin:0 0;transform:scaleX(0.7856);">36</span>
<span class="t" style="top:217.00px;font-size:9.5px;line-height:9.5px;color:#5f7488;left:542.40px;transform-origin:0 0;transform:scaleX(0.6658);">&lt;-</span>
<span class="t" style="top:217.00px;font-size:9.5px;line-height:9.5px;color:#5f7488;left:552.80px;transform-origin:0 0;transform:scaleX(0.7761);">5724</span>
<span class="t" style="top:217.00px;font-size:9.5px;line-height:9.5px;color:#5f7488;left:676.40px;transform-origin:0 0;transform:scaleX(0.8600);">510</span>
<span class="t" style="top:226.00px;font-size:9.5px;line-height:9.5px;color:#7c7c7c;left:412.00px;transform-origin:0 0;transform:scaleX(0.7656);">23-08-2016</span>
<span class="t" style="top:226.00px;font-size:9.5px;line-height:9.5px;color:#7c7c7c;left:454.50px;transform-origin:0 0;transform:scaleX(0.7530);">09:54</span>
<span class="t" style="top:226.00px;font-size:9.5px;line-height:9.5px;color:#7c7c7c;left:483.30px;transform-origin:0 0;transform:scaleX(0.7856);">24</span>
<span class="t" style="top:226.00px;font-size:9.5px;line-height:9.5px;color:#7c7c7c;left:542.40px;transform-origin:0 0;transform:scaleX(0.6658);">-&gt;</span>
<span class="t" style="top:226.00px;font-size:9.5px;line-height:9.5px;color:#7c7c7c;left:552.80px;transform-origin:0 0;transform:scaleX(0.7761);">5736</span>
<span class="t" style="top:226.00px;font-size:9.5px;line-height:9.5px;color:#7c7c7c;left:676.40px;transform-origin:0 0;transform:scaleX(0.8600);">170</span>
<span class="t" style="top:235.00px;font-size:9.5px;line-height:9.5px;color:#7c7c7c;left:412.00px;transform-origin:0 0;transform:scaleX(0.7656);">23-08-2016</span>
<span class="t" style="top:235.00px;font-size:9.5px;line-height:9.5px;color:#7c7c7c;left:454.50px;transform-origin:0 0;transform:scaleX(0.7530);">09:50</span>
<span class="t" style="top:235.00px;font-size:9.5px;line-height:9.5px;color:#7c7c7c;left:483.30px;transform-origin:0 0;transform:scaleX(0.7856);">24</span>
<span class="t" style="top:235.00px;font-size:9.5px;line-height:9.5px;color:#7c7c7c;left:542.40px;transform-origin:0 0;transform:scaleX(0.6658);">-&gt;</span>
<span class="t" style="top:235.00px;font-size:9.5px;line-height:9.5px;color:#7c7c7c;left:552.80px;transform-origin:0 0;transform:scaleX(0.7761);">5736</span>
<span class="t" style="top:235.00px;font-size:9.5px;line-height:9.5px;color:#7c7c7c;left:676.40px;transform-origin:0 0;transform:scaleX(0.8600);">412</span>
<span class="t" style="top:244.00px;font-size:9.5px;line-height:9.5px;color:#7c7c7c;left:412.00px;transform-origin:0 0;transform:scaleX(0.7656);">23-08-2016</span>
<span class="t" style="top:244.00px;font-size:9.5px;line-height:9.5px;color:#7c7c7c;left:454.50px;transform-origin:0 0;transform:scaleX(0.7530);">09:48</span>
<span class="t" style="top:244.00px;font-size:9.5px;line-height:9.5px;color:#7c7c7c;left:483.30px;transform-origin:0 0;transform:scaleX(0.7856);">24</span>
<span class="t" style="top:244.00px;font-size:9.5px;line-height:9.5px;color:#7c7c7c;left:542.40px;transform-origin:0 0;transform:scaleX(0.6658);">-&gt;</span>
<span class="t" style="top:244.00px;font-size:9.5px;line-height:9.5px;color:#7c7c7c;left:552.80px;transform-origin:0 0;transform:scaleX(0.7761);">5736</span>
<span class="t" style="top:244.00px;font-size:9.5px;line-height:9.5px;color:#7c7c7c;left:676.40px;transform-origin:0 0;transform:scaleX(0.8600);">109</span>
<span class="t" style="top:253.00px;font-size:9.5px;line-height:9.5px;color:#7c7c7c;left:412.00px;transform-origin:0 0;transform:scaleX(0.7656);">23-08-2016</span>
<span class="t" style="top:253.00px;font-size:9.5px;line-height:9.5px;color:#7c7c7c;left:454.50px;transform-origin:0 0;transform:scaleX(0.7530);">09:34</span>
<span class="t" style="top:253.00px;font-size:9.5px;line-height:9.5px;color:#7c7c7c;left:483.30px;transform-origin:0 0;transform:scaleX(0.7856);">36</span>
<span class="t" style="top:253.00px;font-size:9.5px;line-height:9.5px;color:#7c7c7c;left:542.40px;transform-origin:0 0;transform:scaleX(0.6658);">&lt;-</span>
<span class="t" style="top:253.00px;font-size:9.5px;line-height:9.5px;color:#7c7c7c;left:552.80px;transform-origin:0 0;transform:scaleX(0.7761);">5724</span>
<span class="t" style="top:253.00px;font-size:9.5px;line-height:9.5px;color:#7c7c7c;left:676.40px;transform-origin:0 0;transform:scaleX(0.8600);">563</span>
<span class="t" style="top:262.00px;font-size:9.5px;line-height:9.5px;color:#7c7c7c;left:412.00px;transform-origin:0 0;transform:scaleX(0.7656);">19-08-2016</span>
<span class="t" style="top:262.00px;font-size:9.5px;line-height:9.5px;color:#7c7c7c;left:454.50px;transform-origin:0 0;transform:scaleX(0.7530);">14:44</span>
<span class="t" style="top:262.00px;font-size:9.5px;line-height:9.5px;color:#7c7c7c;left:483.30px;transform-origin:0 0;transform:scaleX(0.7856);">36</span>
<span class="t" style="top:262.00px;font-size:9.5px;line-height:9.5px;color:#7c7c7c;left:542.40px;transform-origin:0 0;transform:scaleX(0.6658);">&lt;-</span>
<span class="t" style="top:262.00px;font-size:9.5px;line-height:9.5px;color:#7c7c7c;left:552.80px;transform-origin:0 0;transform:scaleX(0.7761);">5724</span>
<span class="t" style="top:262.00px;font-size:9.5px;line-height:9.5px;color:#7c7c7c;left:676.40px;transform-origin:0 0;transform:scaleX(0.8600);">42</span>
<span class="t" style="top:271.00px;font-size:9.5px;line-height:9.5px;color:#7c7c7c;left:412.00px;transform-origin:0 0;transform:scaleX(0.7656);">19-08-2016</span>
<span class="t" style="top:271.00px;font-size:9.5px;line-height:9.5px;color:#7c7c7c;left:454.50px;transform-origin:0 0;transform:scaleX(0.7530);">14:33</span>
<span class="t" style="top:271.00px;font-size:9.5px;line-height:9.5px;color:#7c7c7c;left:483.30px;transform-origin:0 0;transform:scaleX(0.7856);">36</span>
<span class="t" style="top:271.00px;font-size:9.5px;line-height:9.5px;color:#7c7c7c;left:542.40px;transform-origin:0 0;transform:scaleX(0.6658);">&lt;-</span>
<span class="t" style="top:271.00px;font-size:9.5px;line-height:9.5px;color:#7c7c7c;left:552.80px;transform-origin:0 0;transform:scaleX(0.7761);">5724</span>
<span class="t" style="top:271.00px;font-size:9.5px;line-height:9.5px;color:#7c7c7c;left:676.40px;transform-origin:0 0;transform:scaleX(0.8600);">154</span>
<span class="t" style="top:280.00px;font-size:9.5px;line-height:9.5px;color:#7c7c7c;left:412.00px;transform-origin:0 0;transform:scaleX(0.7656);">19-08-2016</span>
<span class="t" style="top:280.00px;font-size:9.5px;line-height:9.5px;color:#7c7c7c;left:454.50px;transform-origin:0 0;transform:scaleX(0.7530);">13:59</span>
<span class="t" style="top:280.00px;font-size:9.5px;line-height:9.5px;color:#7c7c7c;left:483.30px;transform-origin:0 0;transform:scaleX(0.7856);">24</span>
<span class="t" style="top:280.00px;font-size:9.5px;line-height:9.5px;color:#7c7c7c;left:542.40px;transform-origin:0 0;transform:scaleX(0.6658);">-&gt;</span>
<span class="t" style="top:280.00px;font-size:9.5px;line-height:9.5px;color:#7c7c7c;left:552.80px;transform-origin:0 0;transform:scaleX(0.7761);">5736</span>
<span class="t" style="top:289.00px;font-size:9.5px;line-height:9.5px;color:#7c7c7c;left:412.00px;transform-origin:0 0;transform:scaleX(0.7656);">19-08-2016</span>
<span class="t" style="top:289.00px;font-size:9.5px;line-height:9.5px;color:#7c7c7c;left:454.50px;transform-origin:0 0;transform:scaleX(0.7530);">13:52</span>
<span class="t" style="top:289.00px;font-size:9.5px;line-height:9.5px;color:#7c7c7c;left:483.30px;transform-origin:0 0;transform:scaleX(0.7856);">36</span>
<span class="t" style="top:289.00px;font-size:9.5px;line-height:9.5px;color:#7c7c7c;left:542.40px;transform-origin:0 0;transform:scaleX(0.6658);">&lt;-</span>
<span class="t" style="top:289.00px;font-size:9.5px;line-height:9.5px;color:#7c7c7c;left:552.80px;transform-origin:0 0;transform:scaleX(0.7761);">5724</span>
<span class="t" style="top:289.00px;font-size:9.5px;line-height:9.5px;color:#7c7c7c;left:676.40px;transform-origin:0 0;transform:scaleX(0.8600);">173</span>
<span class="t" style="top:298.00px;font-size:9.5px;line-height:9.5px;color:#7c7c7c;left:412.00px;transform-origin:0 0;transform:scaleX(0.7656);">19-08-2016</span>
<span class="t" style="top:298.00px;font-size:9.5px;line-height:9.5px;color:#7c7c7c;left:454.50px;transform-origin:0 0;transform:scaleX(0.7530);">13:39</span>
<span class="t" style="top:298.00px;font-size:9.5px;line-height:9.5px;color:#7c7c7c;left:483.30px;transform-origin:0 0;transform:scaleX(0.7856);">36</span>
<span class="t" style="top:298.00px;font-size:9.5px;line-height:9.5px;color:#7c7c7c;left:542.40px;transform-origin:0 0;transform:scaleX(0.6658);">&lt;-</span>
<span class="t" style="top:298.00px;font-size:9.5px;line-height:9.5px;color:#7c7c7c;left:552.80px;transform-origin:0 0;transform:scaleX(0.7761);">5724</span>
<span class="t" style="top:298.00px;font-size:9.5px;line-height:9.5px;color:#7c7c7c;left:676.40px;transform-origin:0 0;transform:scaleX(0.8600);">66</span>
<span class="t" style="top:307.00px;font-size:9.5px;line-height:9.5px;color:#7c7c7c;left:412.00px;transform-origin:0 0;transform:scaleX(0.7656);">19-08-2016</span>
<span class="t" style="top:307.00px;font-size:9.5px;line-height:9.5px;color:#7c7c7c;left:454.50px;transform-origin:0 0;transform:scaleX(0.7530);">13:16</span>
<span class="t" style="top:307.00px;font-size:9.5px;line-height:9.5px;color:#7c7c7c;left:483.30px;transform-origin:0 0;transform:scaleX(0.7856);">24</span>
<span class="t" style="top:307.00px;font-size:9.5px;line-height:9.5px;color:#7c7c7c;left:542.40px;transform-origin:0 0;transform:scaleX(0.6658);">-&gt;</span>
<span class="t" style="top:307.00px;font-size:9.5px;line-height:9.5px;color:#7c7c7c;left:552.80px;transform-origin:0 0;transform:scaleX(0.7761);">5736</span>
<span class="t" style="top:316.00px;font-size:9.5px;line-height:9.5px;color:#7c7c7c;left:412.00px;transform-origin:0 0;transform:scaleX(0.7656);">19-08-2016</span>
<span class="t" style="top:316.00px;font-size:9.5px;line-height:9.5px;color:#7c7c7c;left:454.50px;transform-origin:0 0;transform:scaleX(0.7530);">13:15</span>
<span class="t" style="top:316.00px;font-size:9.5px;line-height:9.5px;color:#7c7c7c;left:483.30px;transform-origin:0 0;transform:scaleX(0.7856);">36</span>
<span class="t" style="top:316.00px;font-size:9.5px;line-height:9.5px;color:#7c7c7c;left:542.40px;transform-origin:0 0;transform:scaleX(0.6658);">&lt;-</span>
<span class="t" style="top:316.00px;font-size:9.5px;line-height:9.5px;color:#7c7c7c;left:552.80px;transform-origin:0 0;transform:scaleX(0.7761);">5724</span>
<span class="t" style="top:316.00px;font-size:9.5px;line-height:9.5px;color:#7c7c7c;left:676.40px;transform-origin:0 0;transform:scaleX(0.8600);">58</span>
<span class="t" style="top:325.00px;font-size:9.5px;line-height:9.5px;color:#7c7c7c;left:412.00px;transform-origin:0 0;transform:scaleX(0.7656);">19-08-2016</span>
<span class="t" style="top:325.00px;font-size:9.5px;line-height:9.5px;color:#7c7c7c;left:454.50px;transform-origin:0 0;transform:scaleX(0.7530);">12:22</span>
<span class="t" style="top:325.00px;font-size:9.5px;line-height:9.5px;color:#7c7c7c;left:483.30px;transform-origin:0 0;transform:scaleX(0.7856);">24</span>
<span class="t" style="top:325.00px;font-size:9.5px;line-height:9.5px;color:#7c7c7c;left:542.40px;transform-origin:0 0;transform:scaleX(0.6658);">-&gt;</span>
<span class="t" style="top:325.00px;font-size:9.5px;line-height:9.5px;color:#7c7c7c;left:552.80px;transform-origin:0 0;transform:scaleX(0.7761);">5736</span>
<span class="t" style="top:325.00px;font-size:9.5px;line-height:9.5px;color:#7c7c7c;left:676.40px;transform-origin:0 0;transform:scaleX(0.8600);">150</span>
<span class="t" style="top:334.00px;font-size:9.5px;line-height:9.5px;color:#7c7c7c;left:412.00px;transform-origin:0 0;transform:scaleX(0.7656);">19-08-2016</span>
<span class="t" style="top:334.00px;font-size:9.5px;line-height:9.5px;color:#7c7c7c;left:454.50px;transform-origin:0 0;transform:scaleX(0.7530);">12:08</span>
<span class="t" style="top:334.00px;font-size:9.5px;line-height:9.5px;color:#7c7c7c;left:483.30px;transform-origin:0 0;transform:scaleX(0.7856);">36</span>
<span class="t" style="top:334.00px;font-size:9.5px;line-height:9.5px;color:#7c7c7c;left:542.40px;transform-origin:0 0;transform:scaleX(0.6658);">&lt;-</span>
<span class="t" style="top:334.00px;font-size:9.5px;line-height:9.5px;color:#7c7c7c;left:552.80px;transform-origin:0 0;transform:scaleX(0.7761);">5724</span>
<span class="t" style="top:343.00px;font-size:9.5px;line-height:9.5px;color:#7c7c7c;left:412.00px;transform-origin:0 0;transform:scaleX(0.7656);">19-08-2016</span>
<span class="t" style="top:343.00px;font-size:9.5px;line-height:9.5px;color:#7c7c7c;left:454.50px;transform-origin:0 0;transform:scaleX(0.7760);">11:59</span>
<span class="t" style="top:343.00px;font-size:9.5px;line-height:9.5px;color:#7c7c7c;left:483.30px;transform-origin:0 0;transform:scaleX(0.7856);">36</span>
<span class="t" style="top:343.00px;font-size:9.5px;line-height:9.5px;color:#7c7c7c;left:542.40px;transform-origin:0 0;transform:scaleX(0.6658);">&lt;-</span>
<span class="t" style="top:343.00px;font-size:9.5px;line-height:9.5px;color:#7c7c7c;left:552.80px;transform-origin:0 0;transform:scaleX(0.7761);">5724</span>
<span class="t" style="top:352.00px;font-size:9.5px;line-height:9.5px;color:#7c7c7c;left:412.00px;transform-origin:0 0;transform:scaleX(0.7656);">19-08-2016</span>
<span class="t" style="top:352.00px;font-size:9.5px;line-height:9.5px;color:#7c7c7c;left:454.50px;transform-origin:0 0;transform:scaleX(0.7760);">11:58</span>
<span class="t" style="top:352.00px;font-size:9.5px;line-height:9.5px;color:#7c7c7c;left:483.30px;transform-origin:0 0;transform:scaleX(0.7856);">36</span>
<span class="t" style="top:352.00px;font-size:9.5px;line-height:9.5px;color:#7c7c7c;left:542.40px;transform-origin:0 0;transform:scaleX(0.6658);">&lt;-</span>
<span class="t" style="top:352.00px;font-size:9.5px;line-height:9.5px;color:#7c7c7c;left:552.80px;transform-origin:0 0;transform:scaleX(0.7761);">5724</span>
<span class="t" style="top:361.00px;font-size:9.5px;line-height:9.5px;color:#7c7c7c;left:412.00px;transform-origin:0 0;transform:scaleX(0.7656);">19-08-2016</span>
<span class="t" style="top:361.00px;font-size:9.5px;line-height:9.5px;color:#7c7c7c;left:454.50px;transform-origin:0 0;transform:scaleX(0.7760);">11:33</span>
<span class="t" style="top:361.00px;font-size:9.5px;line-height:9.5px;color:#7c7c7c;left:483.30px;transform-origin:0 0;transform:scaleX(0.7856);">36</span>
<span class="t" style="top:361.00px;font-size:9.5px;line-height:9.5px;color:#7c7c7c;left:542.40px;transform-origin:0 0;transform:scaleX(0.6658);">&lt;-</span>
<span class="t" style="top:361.00px;font-size:9.5px;line-height:9.5px;color:#7c7c7c;left:552.80px;transform-origin:0 0;transform:scaleX(0.7761);">5724</span>
<span class="t" style="top:370.00px;font-size:9.5px;line-height:9.5px;color:#7c7c7c;left:412.00px;transform-origin:0 0;transform:scaleX(0.7656);">19-08-2016</span>
<span class="t" style="top:370.00px;font-size:9.5px;line-height:9.5px;color:#7c7c7c;left:454.50px;transform-origin:0 0;transform:scaleX(0.7760);">11:33</span>
<span class="t" style="top:370.00px;font-size:9.5px;line-height:9.5px;color:#7c7c7c;left:483.30px;transform-origin:0 0;transform:scaleX(0.7856);">36</span>
<span class="t" style="top:370.00px;font-size:9.5px;line-height:9.5px;color:#7c7c7c;left:542.40px;transform-origin:0 0;transform:scaleX(0.6658);">&lt;-</span>
<span class="t" style="top:370.00px;font-size:9.5px;line-height:9.5px;color:#7c7c7c;left:552.80px;transform-origin:0 0;transform:scaleX(0.7761);">5720</span>
<div class="a" style="left:739.8px;top:199.5px;width:12.9px;height:180.8px;background:#f0f0f0;"></div>
<div class="a" style="left:741.4px;top:211px;width:9.4px;height:22.4px;background:#c9c9c9;"></div>
<svg class="a" style="left:742.6px;top:202.6px;" width="7.4" height="5" viewBox="0 0 7.4 5"><path d="M0.8,4.2 L3.7,1.2 L6.6,4.2" fill="none" stroke="#444" stroke-width="1.3"/></svg>
<svg class="a" style="left:742.6px;top:371.4px;" width="7.4" height="5" viewBox="0 0 7.4 5"><path d="M0.8,0.8 L3.7,3.8 L6.6,0.8" fill="none" stroke="#444" stroke-width="1.3"/></svg>
<div class="a" style="left:440.1px;top:391.9px;width:312.2px;height:12.4px;background:#2b2b2b;border:1px solid #565c5e;box-sizing:border-box;"></div>
<div class="a" style="left:247.6px;top:411.1px;width:505.2px;height:92.7px;background:#2b2b2b;"></div>
<div class="a" style="left:247.6px;top:411.1px;width:505.2px;height:16.9px;background:#fff;"></div>
<svg class="a" style="left:0px;top:0px;" width="876" height="517" viewBox="0 0 876 517"><rect x="323.1" y="412.4" width="1" height="15" fill="#e3e3e3"/><rect x="399" y="412.4" width="1" height="15" fill="#e3e3e3"/><rect x="423.7" y="412.4" width="1" height="15" fill="#e3e3e3"/><rect x="449" y="412.4" width="1" height="15" fill="#e3e3e3"/><rect x="580.1" y="412.4" width="1" height="15" fill="#e3e3e3"/><rect x="600.2" y="412.4" width="1" height="15" fill="#e3e3e3"/><rect x="620.1" y="412.4" width="1" height="15" fill="#e3e3e3"/></svg>
<span class="t" style="top:415.00px;font-size:8.8px;line-height:8.8px;color:#000;left:260.40px;transform-origin:0 0;transform:scaleX(0.8178);">Date</span>
<span class="t" style="top:415.00px;font-size:8.8px;line-height:8.8px;color:#000;left:327.50px;transform-origin:0 0;transform:scaleX(0.8375);">Object</span>
<span class="t" style="top:415.00px;font-size:8.8px;line-height:8.8px;color:#000;left:406.00px;transform-origin:0 0;transform:scaleX(0.8181);">Dur</span>
<span class="t" style="top:415.00px;font-size:8.8px;line-height:8.8px;color:#000;left:429.70px;transform-origin:0 0;transform:scaleX(0.7682);">Alert</span>
<span class="t" style="top:415.00px;font-size:8.8px;line-height:8.8px;color:#000;left:454.00px;transform-origin:0 0;transform:scaleX(0.8176);">Left</span>
<span class="t" style="top:415.00px;font-size:8.8px;line-height:8.8px;color:#000;left:586.50px;transform-origin:0 0;transform:scaleX(0.7829);">Dir</span>
<span class="t" style="top:415.00px;font-size:8.8px;line-height:8.8px;color:#000;left:604.70px;transform-origin:0 0;transform:scaleX(0.8558);">S...</span>
<span class="t" style="top:415.00px;font-size:8.8px;line-height:8.8px;color:#000;left:625.00px;transform-origin:0 0;transform:scaleX(0.8276);">Right</span>
<span class="t" style="top:430.00px;font-size:9.2px;line-height:9.2px;color:#f4f4f4;left:252.00px;transform-origin:0 0;transform:scaleX(0.8468);">23/08/2016 09:55:...</span>
<span class="t" style="top:430.00px;font-size:9.2px;line-height:9.2px;color:#f4f4f4;left:327.50px;transform-origin:0 0;transform:scaleX(0.8255);">Laura_Toffali 36</span>
<span class="t" style="top:430.00px;font-size:9.2px;line-height:9.2px;color:#f4f4f4;left:404.40px;transform-origin:0 0;transform:scaleX(0.8043);">0:16</span>
<span class="t" style="top:430.00px;font-size:9.2px;line-height:9.2px;color:#f4f4f4;left:429.30px;transform-origin:0 0;transform:scaleX(0.7987);">0:01</span>
<span class="t" style="top:430.00px;font-size:9.2px;line-height:9.2px;color:#f4f4f4;left:454.00px;transform-origin:0 0;transform:scaleX(0.8075);">Laura_test 36 (36) Laura_Toffali 36</span>
<span class="t" style="top:430.00px;font-size:9.2px;line-height:9.2px;color:#f4f4f4;left:588.00px;transform-origin:0 0;transform:scaleX(0.8747);">&gt;</span>
<span class="t" style="top:430.00px;font-size:9.2px;line-height:9.2px;color:#f4f4f4;left:606.30px;transform-origin:0 0;transform:scaleX(0.7719);">co</span>
<span class="t" style="top:430.00px;font-size:9.2px;line-height:9.2px;color:#f4f4f4;left:625.00px;transform-origin:0 0;transform:scaleX(0.8033);">Valentina (5724) Valentina</span>
<span class="t" style="top:442.00px;font-size:9.2px;line-height:9.2px;color:#f4f4f4;left:252.00px;transform-origin:0 0;transform:scaleX(0.8468);">23/08/2016 09:55:...</span>
<span class="t" style="top:442.00px;font-size:9.2px;line-height:9.2px;color:#f4f4f4;left:327.50px;transform-origin:0 0;transform:scaleX(0.7883);">Valentina</span>
<span class="t" style="top:442.00px;font-size:9.2px;line-height:9.2px;color:#f4f4f4;left:404.40px;transform-origin:0 0;transform:scaleX(0.8043);">0:17</span>
<span class="t" style="top:442.00px;font-size:9.2px;line-height:9.2px;color:#f4f4f4;left:429.30px;transform-origin:0 0;transform:scaleX(0.7987);">0:00</span>
<span class="t" style="top:442.00px;font-size:9.2px;line-height:9.2px;color:#f4f4f4;left:454.00px;transform-origin:0 0;transform:scaleX(0.7952);">Valentina (24) Valentina</span>
<span class="t" style="top:442.00px;font-size:9.2px;line-height:9.2px;color:#f4f4f4;left:588.00px;transform-origin:0 0;transform:scaleX(0.8747);">&lt;</span>
<span class="t" style="top:442.00px;font-size:9.2px;line-height:9.2px;color:#f4f4f4;left:606.30px;transform-origin:0 0;transform:scaleX(0.7719);">co</span>
<span class="t" style="top:442.00px;font-size:9.2px;line-height:9.2px;color:#f4f4f4;left:625.00px;transform-origin:0 0;transform:scaleX(0.8110);">Laura_test 36 (5736) Laura Toffali ...</span>
<div class="a" style="left:247.6px;top:503.8px;width:505.2px;height:5.8px;background:linear-gradient(#8a8a8a,#cdcdcd 35%,#c6c6c6 60%,#9a9a9a);"></div>
<div class="a" style="left:500px;top:506px;width:20px;height:2.3px;background:#777;"></div>
</body></html>
